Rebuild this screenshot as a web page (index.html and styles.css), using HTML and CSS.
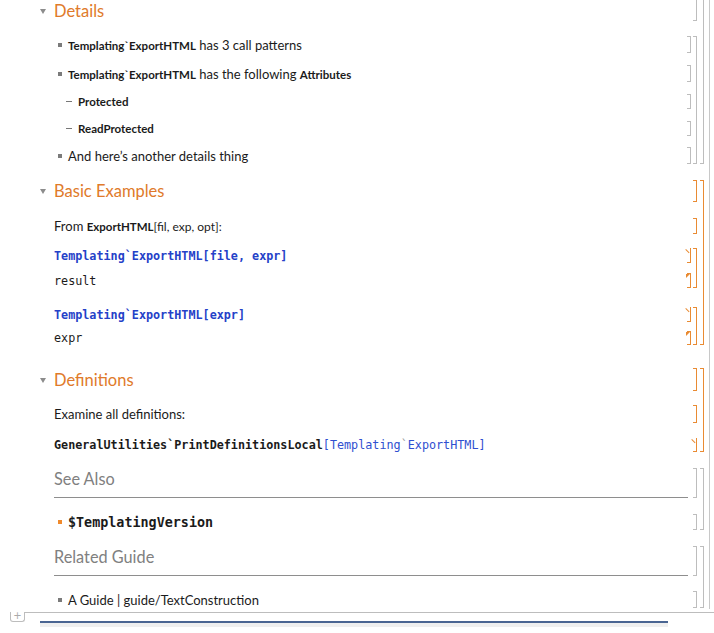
FILE: index.html
```html
<!DOCTYPE html>
<html>
<head>
<meta charset="utf-8">
<link rel="stylesheet" href="styles.css">
</head>
<body>
<div class="nb">

  <div class="sec gray">
    <div class="sec-body">
      <div class="row h21">
        <div class="cc head"><span class="tri"></span><span>Details</span></div>
        <div class="br b2 notop"></div>
      </div>
      <div class="grp mt15">
        <div class="grp-body">
          <div class="row h17">
            <div class="cc item"><span class="sq"></span><span><span class="sym">Templating`ExportHTML</span> has 3 call patterns</span></div>
            <div class="br b1"></div>
          </div>
          <div class="row h17 mt12">
            <div class="cc item"><span class="sq"></span><span><span class="sym">Templating`ExportHTML</span> has the following <span class="sym">Attributes</span></span></div>
            <div class="br b1"></div>
          </div>
          <div class="row h15 mt12">
            <div class="cc subitem"><span class="dash"></span><span class="sym">Protected</span></div>
            <div class="br b1"></div>
          </div>
          <div class="row h15 mt12">
            <div class="cc subitem"><span class="dash"></span><span class="sym">ReadProtected</span></div>
            <div class="br b1"></div>
          </div>
          <div class="row h17 mt11">
            <div class="cc item"><span class="sq"></span><span>And here’s another details thing</span></div>
            <div class="br b1"></div>
          </div>
        </div>
        <div class="br b2"></div>
      </div>
    </div>
    <div class="br b3 notop"></div>
  </div>

  <div class="sec orange mt16">
    <div class="sec-body">
      <div class="row h22">
        <div class="cc head"><span class="tri"></span><span>Basic Examples</span></div>
        <div class="br b2"></div>
      </div>
      <div class="row h16 mt16">
        <div class="cc text"><span>From <span class="sym tsym">ExportHTML</span><span class="args">[fil, exp, opt]:</span></span></div>
        <div class="br b2"></div>
      </div>
      <div class="grp mt14">
        <div class="grp-body">
          <div class="row h15">
            <div class="cc code in"><span>Templating`ExportHTML[file, expr]</span></div>
            <div class="br b1 inp"></div>
          </div>
          <div class="row h15 mt10">
            <div class="cc code out"><span>result</span></div>
            <div class="br b1 outp"></div>
          </div>
        </div>
        <div class="br b2"></div>
      </div>
      <div class="grp mt19">
        <div class="grp-body">
          <div class="row h15">
            <div class="cc code in"><span>Templating`ExportHTML[expr]</span></div>
            <div class="br b1 inp"></div>
          </div>
          <div class="row h14 mt9">
            <div class="cc code out"><span>expr</span></div>
            <div class="br b1 outp"></div>
          </div>
        </div>
        <div class="br b2"></div>
      </div>
    </div>
    <div class="br b3"></div>
  </div>

  <div class="sec orange mt23">
    <div class="sec-body">
      <div class="row h23">
        <div class="cc head"><span class="tri"></span><span>Definitions</span></div>
        <div class="br b2"></div>
      </div>
      <div class="row h18 mt14">
        <div class="cc text"><span>Examine all definitions:</span></div>
        <div class="br b2"></div>
      </div>
      <div class="row h14 mt15">
        <div class="cc code def"><span><span class="blk">GeneralUtilities`PrintDefinitionsLocal</span><span class="lb">[Templating<span class="tick">`</span>ExportHTML]</span></span></div>
        <div class="br b2 inp"></div>
      </div>
    </div>
    <div class="br b3"></div>
  </div>

  <div class="sec gray mt16">
    <div class="sec-body">
      <div class="row h30">
        <div class="cc ghead"><span>See Also</span></div>
        <div class="br b2"></div>
      </div>
      <div class="row h16 mt16">
        <div class="cc item"><span class="sq osq"></span><span class="ver">$TemplatingVersion</span></div>
        <div class="br b2"></div>
      </div>
    </div>
    <div class="br b3"></div>
  </div>

  <div class="sec gray mt16">
    <div class="sec-body">
      <div class="row h30">
        <div class="cc ghead"><span>Related Guide</span></div>
        <div class="br b2"></div>
      </div>
      <div class="row h17 mt15">
        <div class="cc item"><span class="sq"></span><span>A Guide | guide/TextConstruction</span></div>
        <div class="br b2"></div>
      </div>
    </div>
    <div class="br b3"></div>
  </div>

</div>

<div class="foot">
  <div class="tab">+</div>
  <div class="hl"></div>
</div>
<div class="blue"></div>
</body>
</html>
```

FILE: styles.css
```css
* { box-sizing: border-box; margin: 0; padding: 0; }
html, body { background: #fff; }
body {
  margin: 0;
  width: 714px;
  height: 633px;
  overflow: hidden;
  font-family: Lato, "Open Sans", sans-serif;
  color: #1b1b1b;
}
.nb {
  width: 710px;
  border-right: 1px solid #c8c8c8;
  padding-bottom: 1px;
  display: flex;
  flex-direction: column;
}
.sec, .grp, .row { display: flex; }
.sec-body, .grp-body {
  flex: 1;
  min-width: 0;
  display: flex;
  flex-direction: column;
}
.cc {
  flex: 1;
  min-width: 0;
  display: flex;
  align-items: center;
  white-space: nowrap;
}
.br {
  flex: none;
  width: 4px;
  border: 1px solid #bdbdbd;
  border-left: none;
  position: relative;
}
.b1 { margin-right: 2px; }
.b2 { margin-right: 3px; }
.b3 { margin-right: 5px; }
.notop { border-top: none; }
.orange .br { border-color: #e98b33; }

.inp { border-top: none; }
.inp::before {
  content: "";
  position: absolute;
  left: -1px;
  top: 1px;
  width: 5px;
  height: 1px;
  background: #e98b33;
  transform: rotate(45deg);
  transform-origin: 0 0;
}
.outp::before {
  content: "";
  position: absolute;
  left: -1px;
  top: 0;
  width: 0;
  height: 0;
  border-top: 4px solid #e98b33;
  border-right: 4px solid transparent;
}

.h14 { height: 14px; } .h15 { height: 15px; } .h16 { height: 16px; }
.h17 { height: 17px; } .h18 { height: 18px; } .h21 { height: 21px; }
.h22 { height: 22px; } .h23 { height: 23px; } .h30 { height: 30px; }
.mt9 { margin-top: 9px; } .mt10 { margin-top: 10px; } .mt11 { margin-top: 11px; }
.mt12 { margin-top: 12px; } .mt14 { margin-top: 14px; } .mt15 { margin-top: 15px; }
.mt16 { margin-top: 16px; } .mt19 { margin-top: 19px; } .mt23 { margin-top: 23px; }

.head {
  padding-left: 40px;
  font-size: 16.5px;
  color: #e07a2a;
}
.tri {
  display: inline-block;
  width: 0;
  height: 0;
  border-left: 3px solid transparent;
  border-right: 3px solid transparent;
  border-top: 5px solid #8c8c8c;
  margin-right: 8px;
  margin-top: 1px;
}
.item {
  padding-left: 58px;
  font-size: 13px;
}
.subitem {
  padding-left: 66px;
  font-size: 13px;
}
.sq {
  display: inline-block;
  flex: none;
  width: 4px;
  height: 4px;
  background: #7b7b7b;
  margin-right: 6px;
}
.osq { background: #f08a2c; }
.dash {
  display: inline-block;
  flex: none;
  width: 6px;
  height: 1px;
  background: #777;
  margin-right: 6px;
}
.sym {
  font-weight: 700;
  font-size: 11.5px;
}
.text {
  padding-left: 54px;
  font-size: 13px;
}
.tsym { font-size: 11.5px; }
.args { font-size: 12px; }
.code {
  padding-left: 54px;
  font-family: "DejaVu Sans Mono", monospace;
  font-size: 11.75px;
}
.in { color: #2541c8; font-weight: 700; }
.out { color: #1b1b1b; }
.def .blk { font-weight: 700; color: #1b1b1b; }
.def .lb { color: #2f4fd0; }
.tick { color: #9a9a9a; }
.ver {
  font-family: "DejaVu Sans Mono", monospace;
  font-weight: 700;
  font-size: 13.4px;
}
.ghead {
  margin-left: 54px;
  margin-right: 5px;
  align-items: flex-start;
  padding-top: 1px;
  line-height: 20px;
  font-size: 16.3px;
  color: #808080;
  border-bottom: 1px solid #8e8e8e;
}

.foot {
  display: flex;
  margin-top: 3px;
}
.tab {
  width: 15px;
  height: 10px;
  margin-left: 10px;
  border: 1px solid #bdbdbd;
  border-top: none;
  border-radius: 0 0 3px 3px;
  color: #aaa;
  font-family: "DejaVu Sans", sans-serif;
  font-size: 10px;
  line-height: 7px;
  text-align: center;
}
.hl {
  flex: 1;
  border-top: 1px solid #bdbdbd;
}
.blue {
  margin-left: 40px;
  width: 628px;
  height: 6px;
  border-top: 2px solid #4a6592;
  background: #efefef;
  margin-top: -1px;
}
```
